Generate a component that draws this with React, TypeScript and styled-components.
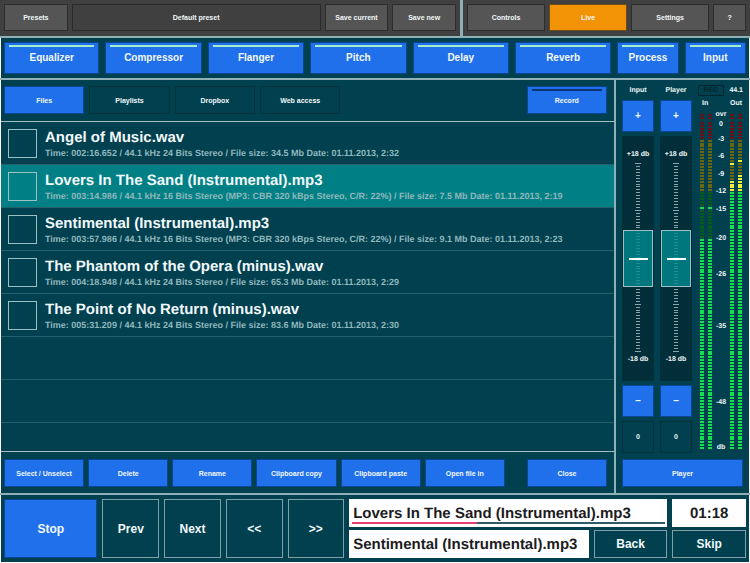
import React from "react";
import styled, { createGlobalStyle, css } from "styled-components";

const Global = createGlobalStyle`
  * { box-sizing: border-box; }
  body { margin: 0; background: #fff; font-family: "Liberation Sans", Arial, sans-serif; font-weight: 700; text-rendering: geometricPrecision; }
  button, input, output { font: inherit; color: inherit; margin: 0; }
`;

const LINE = "#8fb0b6";
const TEAL = "#00404f";

const Page = styled.div`
  display: flex;
  flex-direction: column;
  min-height: calc(100vh - 1px);
  padding: 0 1px;
  margin-bottom: 1px;
  color: #f2f8fa;
`;

type Tone = "blue" | "dark" | "grey" | "flat" | "orange" | "outline";
const tones: Record<Tone, ReturnType<typeof css>> = {
  blue: css`background: #1f70ea; border-color: #0b4594;`,
  dark: css`background: ${TEAL}; border-color: #06303a;`,
  grey: css`background: #555; border-color: #2c2c2c;`,
  flat: css`background: #404040; border-color: #2a2a2a;`,
  orange: css`background: #f29305; border-color: #6b4a18;`,
  outline: css`background: ${TEAL}; border-color: #7fa0a7;`,
};

const Button = styled.button<{ $tone: Tone; $grow?: number; $size?: number }>`
  position: relative;
  flex: ${(p) => p.$grow ?? 1} 1 0;
  min-width: 0;
  height: 100%;
  padding: 0;
  border: 1px solid;
  font-size: ${(p) => p.$size ?? 7}px;
  line-height: 1;
  white-space: nowrap;
  ${(p) => tones[p.$tone]}
`;

const Lamp = styled.span<{ $on: boolean }>`
  position: absolute;
  top: 2px;
  left: 4px;
  right: 4px;
  height: 2px;
  background: ${(p) => (p.$on ? "#a4ecc8" : "#0c3576")};
`;

const TopBar = styled.header`
  display: flex;
  height: 36px;
  margin: 0 -1px;
  background: #404040;
`;
const TopGroup = styled.div<{ $grow: number }>`
  display: flex;
  flex: ${(p) => p.$grow} 1 0;
  gap: 4px;
  padding: 4px 4px 5px;
  & + & { border-left: 3px solid ${LINE}; }
`;
const Rule = styled.div`
  height: 2px;
  margin: 0 -1px;
  background: ${LINE};
`;
const Effects = styled.nav`
  display: flex;
  height: 40px;
  gap: 6px;
  padding: 4px 3px;
  background: ${TEAL};
`;
const Main = styled.main`
  display: flex;
  flex: 1;
  background: ${TEAL};
`;
const Browser = styled.section`
  display: flex;
  flex-direction: column;
  flex: 1;
  min-width: 0;
`;
const ToolRow = styled.div`
  display: grid;
  grid-template-columns: repeat(6, 80fr) 14fr 80fr;
  gap: 0 4px;
  height: 41px;
  padding: 7px 7px 6px 3px;
`;
const TabRow = styled.div`
  display: flex;
  gap: 5px;
  height: 41px;
  padding: 6px 7px 7px 3px;
`;
const Spacer = styled.span<{ $grow: number }>`
  flex: ${(p) => p.$grow} 1 0;
`;
const List = styled.ul`
  flex: 1 1 330px;
  min-height: 0;
  margin: 0;
  padding: 0;
  list-style: none;
  overflow: hidden;
  border-top: 1px solid #a3c0c5;
  border-bottom: 1px solid #a3c0c5;
`;
const Row = styled.li<{ $active?: boolean }>`
  height: 43px;
  border-bottom: 1px solid #24616c;
  background: ${(p) => (p.$active ? "#008084" : "transparent")};
  &:last-child { height: 28px; border-bottom: 0; }
`;
const RowLabel = styled.label`
  display: flex;
  align-items: center;
  gap: 8px;
  height: 100%;
  padding-left: 7px;
`;
const Tick = styled.input`
  appearance: none;
  width: 29px;
  height: 29px;
  border: 1px solid #9cc0c4;
  &:checked { background: #1f70ea; }
`;
const Name = styled.div`
  padding-top: 1px;
  font-size: 15px;
  line-height: 18px;
`;
const Meta = styled.div`
  font-size: 9px;
  line-height: 12px;
  color: #92b7bd;
`;
const Mixer = styled.section`
  display: flex;
  flex-direction: column;
  width: 135px;
  padding: 5px 6px 6px;
  border-left: 2px solid ${LINE};
  font-size: 7px;
`;
const MixerTop = styled.div`
  display: flex;
  flex: 1;
  gap: 6px;
  margin-bottom: 6px;
`;
const Strip = styled.div`
  display: flex;
  flex-direction: column;
  gap: 4px;
  width: 32px;
`;
const StripName = styled.label`
  height: 11px;
  line-height: 12px;
  text-align: center;
`;
const StepBox = styled.div`
  height: 32px;
`;
const SourceBox = styled.div`
  height: 28px;
`;
const Wide = styled(Button)`
  width: 100%;
`;
const Value = styled.output`
  display: flex;
  align-items: center;
  justify-content: center;
  height: 32px;
  border: 1px solid #06303a;
`;
const Track = styled.div`
  position: relative;
  display: flex;
  flex: 1;
  flex-direction: column;
  align-items: center;
  justify-content: space-between;
  padding: 14px 0 16px;
  background: #022e39;
  line-height: 10px;
  white-space: nowrap;
`;
const Fader = styled.input`
  position: absolute;
  inset: 0;
  width: 100%;
  height: 100%;
  margin: 0;
  appearance: none;
  background: transparent;
  writing-mode: vertical-lr;
  direction: rtl;
  &::-webkit-slider-thumb {
    appearance: none;
    width: 30px;
    height: 57px;
    border: 1px solid #9cc0c4;
    background:
      linear-gradient(#fff, #fff) center / 19px 2px no-repeat,
      rgba(0, 138, 142, 0.8);
  }
`;
const Meters = styled.div`
  display: flex;
  flex: 1;
  flex-direction: column;
`;
const MeterHead = styled.div`
  display: flex;
  justify-content: space-between;
  height: 11px;
  line-height: 11px;
`;
const Rec = styled.span`
  width: 26px;
  border: 1px solid #05252d;
  color: #05252d;
  line-height: 9px;
  text-align: center;
`;
const MeterNames = styled.div`
  display: flex;
  justify-content: space-between;
  padding: 2px 1px 0 4px;
  height: 12px;
  line-height: 11px;
`;
const MeterSvg = styled.svg`
  display: block;
  width: 100%;
  overflow: visible;
  font-size: 7px;
  fill: #f2f8fa;
`;
const Transport = styled.footer`
  display: grid;
  grid-template-columns: 94fr 57fr 57fr 57fr 57fr 320fr 74fr;
  gap: 5px;
  height: 67px;
  padding: 4px 3px;
  background: ${TEAL};
`;
const Stack = styled.div`
  display: grid;
  grid-template-rows: 28px 28px;
  gap: 3px;
  min-width: 0;
`;
const Split = styled.div`
  display: grid;
  grid-template-columns: 241fr 74fr;
  gap: 5px;
`;
const Display = styled.div<{ $center?: boolean }>`
  position: relative;
  display: flex;
  align-items: center;
  justify-content: ${(p) => (p.$center ? "center" : "flex-start")};
  padding: 0 4px;
  background: #fff;
  color: #1c1c1e;
  font-size: 15px;
  line-height: 17px;
  white-space: nowrap;
`;
const Progress = styled.progress`
  position: absolute;
  left: 3px;
  bottom: 3px;
  width: calc(100% - 5px);
  height: 2px;
  appearance: none;
  border: 0;
  &::-webkit-progress-bar { background: #2c5b6a; }
  &::-webkit-progress-value { background: #e83e6b; }
`;

const effects: [string, number][] = [
  ["Equalizer", 96], ["Compressor", 97], ["Flanger", 97], ["Pitch", 97],
  ["Delay", 97], ["Reverb", 97], ["Process", 61], ["Input", 61],
];
const files = [
  ["Angel of Music.wav", "Time: 002:16.652 / 44.1 kHz 24 Bits Stereo / File size: 34.5 Mb Date: 01.11.2013, 2:32"],
  ["Lovers In The Sand (Instrumental).mp3", "Time: 003:14.986 / 44.1 kHz 16 Bits Stereo (MP3: CBR 320 kBps Stereo, C/R: 22%) / File size: 7.5 Mb Date: 01.11.2013, 2:19"],
  ["Sentimental (Instrumental).mp3", "Time: 003:57.986 / 44.1 kHz 16 Bits Stereo (MP3: CBR 320 kBps Stereo, C/R: 22%) / File size: 9.1 Mb Date: 01.11.2013, 2:23"],
  ["The Phantom of the Opera (minus).wav", "Time: 004:18.948 / 44.1 kHz 24 Bits Stereo / File size: 65.3 Mb Date: 01.11.2013, 2:29"],
  ["The Point of No Return (minus).wav", "Time: 005:31.209 / 44.1 kHz 24 Bits Stereo / File size: 83.6 Mb Date: 01.11.2013, 2:30"],
];
const actions = ["Select / Unselect", "Delete", "Rename", "Clipboard copy", "Clipboard paste", "Open file in"];

const scale: [string, number][] = [
  ["ovr", 5], ["0", 15], ["-3", 30], ["-6", 47], ["-9", 65], ["-12", 82],
  ["-15", 100], ["-20", 129], ["-26", 165], ["-35", 217], ["-48", 293], ["db", 338],
];
const PITCH = 2.93;
const channels = [
  { x: 2, level: 40, peak: 29 },
  { x: 10, level: 40, peak: 29 },
  { x: 32, level: 20, peak: 14 },
  { x: 40, level: 18, peak: 13 },
];

function ledColor(i: number, level: number, peak: number) {
  const on = i >= level || i === peak;
  if (i < 6) return on ? "#f02020" : "#6a0f16";
  if (i < 24) return on ? "#f4f03c" : "#6b6510";
  return on ? "#12e04c" : "#065a1c";
}

function LevelMeters() {
  return (
    <MeterSvg viewBox="0 0 45 342" role="img" aria-label="Input and output levels">
      {channels.map((c) => (
        <g key={c.x}>
          <rect x={c.x} y="6" width="4" height="2" fill="#6a0f16" />
          <rect x={c.x} y="9" width="4" height="2" fill="#6a0f16" />
          {Array.from({ length: 112 }, (_, i) => (
            <rect key={i} x={c.x} y={Math.round(14 + i * PITCH)} width="4" height="2" fill={ledColor(i, c.level, c.peak)} />
          ))}
        </g>
      ))}
      {scale.map(([t, y]) => (
        <text key={t} x="23" y={y + 3} textAnchor="middle">{t}</text>
      ))}
    </MeterSvg>
  );
}

function Channel({ name }: { name: string }) {
  const id = `fader-${name}`;
  return (
    <Strip>
      <StripName htmlFor={id}>{name}</StripName>
      <StepBox><Wide $tone="blue" $size={10} aria-label={`${name} up`}>+</Wide></StepBox>
      <Track>
        <span>+18 db</span>
        <svg width="8" height="189" aria-hidden="true">
          {Array.from({ length: 65 }, (_, i) => {
            const w = i % 16 === 0 ? 6 : 4;
            return <rect key={i} x={4 - w / 2} y={Math.round(i * PITCH)} width={w} height="1" fill="#8ba3a9" />;
          })}
        </svg>
        <span>-18 db</span>
        <Fader id={id} type="range" min={-18} max={18} defaultValue={0} />
      </Track>
      <StepBox><Wide $tone="blue" $size={10} aria-label={`${name} down`}>–</Wide></StepBox>
      <Value htmlFor={id}>0</Value>
    </Strip>
  );
}

export default function App() {
  return (
    <>
      <Global />
      <Page>
        <TopBar>
          <TopGroup $grow={452}>
            <Button $tone="grey" $grow={63}>Presets</Button>
            <Button $tone="flat" $grow={252}>Default preset</Button>
            <Button $tone="grey" $grow={63}>Save current</Button>
            <Button $tone="grey" $grow={63}>Save new</Button>
          </TopGroup>
          <TopGroup $grow={279}>
            <Button $tone="grey" $grow={79}>Controls</Button>
            <Button $tone="orange" $grow={79}>Live</Button>
            <Button $tone="grey" $grow={79}>Settings</Button>
            <Button $tone="grey" $grow={32}>?</Button>
          </TopGroup>
        </TopBar>
        <Rule />
        <Effects>
          {effects.map(([n, g]) => (
            <Button key={n} $tone="blue" $grow={g} $size={10}><Lamp $on />{n}</Button>
          ))}
        </Effects>
        <Rule />
        <Main>
          <Browser>
            <TabRow>
              <Button $tone="blue" $grow={80}>Files</Button>
              <Button $tone="dark" $grow={80}>Playlists</Button>
              <Button $tone="dark" $grow={80}>Dropbox</Button>
              <Button $tone="dark" $grow={80}>Web access</Button>
              <Spacer $grow={180} />
              <Button $tone="blue" $grow={80}><Lamp $on={false} />Record</Button>
            </TabRow>
            <List>
              {files.map(([name, meta], i) => (
                <Row key={name} $active={i === 1}>
                  <RowLabel>
                    <Tick type="checkbox" />
                    <div><Name>{name}</Name><Meta>{meta}</Meta></div>
                  </RowLabel>
                </Row>
              ))}
              <Row /><Row /><Row />
            </List>
            <ToolRow>
              {actions.map((a) => <Button key={a} $tone="blue">{a}</Button>)}
              <span />
              <Button $tone="blue">Close</Button>
            </ToolRow>
          </Browser>
          <Mixer>
            <MixerTop>
              <Channel name="Input" />
              <Channel name="Player" />
              <Meters>
                <MeterHead><Rec>REC</Rec><span>44.1</span></MeterHead>
                <MeterNames><span>In</span><span>Out</span></MeterNames>
                <LevelMeters />
              </Meters>
            </MixerTop>
            <SourceBox><Wide $tone="blue">Player</Wide></SourceBox>
          </Mixer>
        </Main>
        <Rule />
        <Transport>
          <Button $tone="blue" $size={12}>Stop</Button>
          <Button $tone="outline" $size={12}>Prev</Button>
          <Button $tone="outline" $size={12}>Next</Button>
          <Button $tone="outline" $size={12}>&lt;&lt;</Button>
          <Button $tone="outline" $size={12}>&gt;&gt;</Button>
          <Stack>
            <Display>
              Lovers In The Sand (Instrumental).mp3
              <Progress value={40} max={100} aria-label="Track position" />
            </Display>
            <Split>
              <Display>Sentimental (Instrumental).mp3</Display>
              <Button $tone="outline" $size={12}>Back</Button>
            </Split>
          </Stack>
          <Stack>
            <Display $center>01:18</Display>
            <Button $tone="outline" $size={12}>Skip</Button>
          </Stack>
        </Transport>
      </Page>
    </>
  );
}
